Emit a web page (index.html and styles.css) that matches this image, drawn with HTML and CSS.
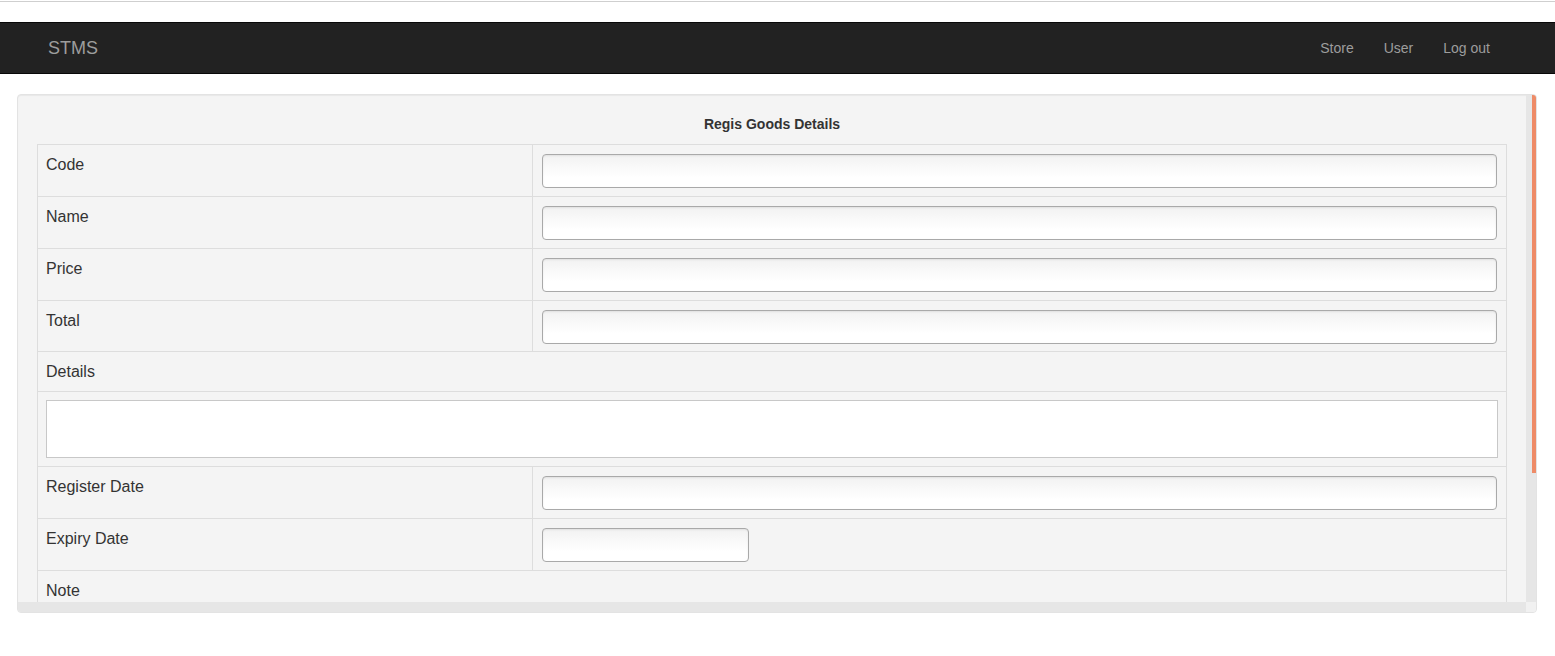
FILE: index.html
```html
<!DOCTYPE html>
<html>
<head>
<meta charset="utf-8">
<title>STMS</title>
<link rel="stylesheet" href="styles.css">
</head>
<body>
<div class="topline"></div>
<nav class="navbar">
  <a class="brand" href="#">STMS</a>
  <ul class="nav">
    <li><a href="#">Store</a></li>
    <li><a href="#">User</a></li>
    <li><a href="#">Log out</a></li>
  </ul>
</nav>
<div class="page">
  <div class="panel">
    <div class="content">
      <div class="title">Regis Goods Details</div>
      <table class="form-table">
        <colgroup><col class="col-label"><col></colgroup>
        <tr><td class="label">Code</td><td class="field"><input class="inp" type="text"></td></tr>
        <tr><td class="label">Name</td><td class="field"><input class="inp" type="text"></td></tr>
        <tr><td class="label">Price</td><td class="field"><input class="inp" type="text"></td></tr>
        <tr><td class="label">Total</td><td class="field field-tight"><input class="inp" type="text"></td></tr>
        <tr><td class="label label-wide" colspan="2">Details</td></tr>
        <tr><td class="field area-cell" colspan="2"><textarea class="area"></textarea></td></tr>
        <tr><td class="label">Register Date</td><td class="field"><input class="inp" type="text"></td></tr>
        <tr><td class="label">Expiry Date</td><td class="field"><input class="inp inp-short" type="text"></td></tr>
        <tr><td class="label label-wide" colspan="2">Note</td></tr>
        <tr><td class="field area-cell" colspan="2"><textarea class="area"></textarea></td></tr>
      </table>
    </div>
    <div class="vbar"><div class="vthumb"></div></div>
    <div class="hbar"></div>
    <div class="corner"></div>
  </div>
</div>
</body>
</html>
```
FILE: styles.css
```css
html, body {
  margin: 0;
  padding: 0;
  background: #fff;
  font-family: "Liberation Sans", Arial, sans-serif;
  font-size: 14px;
  line-height: 20px;
  color: #333;
}

.topline {
  margin-top: 1px;
  height: 0;
  border-top: 1px solid #cfcfcf;
}

.navbar {
  margin-top: 20px;
  height: 50px;
  background: #222;
  border-top: 1px solid #080808;
  border-bottom: 1px solid #080808;
  display: flex;
  align-items: center;
  justify-content: space-between;
  padding: 0 50px 0 48px;
}

.brand {
  color: #9d9d9d;
  font-size: 18px;
  text-decoration: none;
  line-height: 20px;
}

.nav {
  list-style: none;
  margin: 0;
  padding: 0;
  display: flex;
}

.nav a {
  display: block;
  padding: 0 15px;
  color: #9d9d9d;
  text-decoration: none;
  font-size: 14px;
}

.page {
  padding: 20px 18px 0 17px;
}

.panel {
  height: 517px;
  border: 1px solid #e3e3e3;
  border-radius: 4px;
  background: #f4f4f4;
  box-shadow: inset 0 1px 1px rgba(0, 0, 0, 0.05);
  display: grid;
  grid-template-columns: 1fr 10px;
  grid-template-rows: 1fr 10px;
  overflow: hidden;
}

.content {
  overflow: hidden;
  padding: 19px 19px 0 19px;
  min-width: 0;
  min-height: 0;
}

.title {
  text-align: center;
  font-weight: bold;
  font-size: 14px;
  line-height: 20px;
  padding-bottom: 10px;
}

.form-table {
  width: 100%;
  border-collapse: collapse;
  border: 1px solid #ddd;
  table-layout: fixed;
}

.col-label {
  width: 495px;
}

.form-table td {
  border: 1px solid #ddd;
  vertical-align: top;
}

.label {
  font-size: 16px;
  line-height: 22px;
  padding: 9px 8px 9px 8px;
}

.label-wide {
  padding: 9px 8px 8px 8px;
}

.field {
  padding: 9px 9px 8px 9px;
}

.field-tight {
  padding-bottom: 7px;
}

.area-cell {
  padding: 8px 8px 8px 8px;
}

.inp {
  display: block;
  box-sizing: border-box;
  width: 100%;
  height: 34px;
  margin: 0;
  border: 1px solid #a9a9a9;
  border-radius: 4px;
  background: linear-gradient(#f2f2f2, #ffffff 70%);
  box-shadow: inset 0 1px 2px rgba(0, 0, 0, 0.08);
  font: inherit;
  padding: 6px 12px;
}

.inp-short {
  width: 207px;
}

.area {
  display: block;
  box-sizing: border-box;
  width: 100%;
  height: 58px;
  margin: 0;
  border: 1px solid #c8c8c8;
  background: #fff;
  resize: none;
  font: inherit;
}

.vbar {
  background: #e6e6e6;
  position: relative;
}

.vthumb {
  position: absolute;
  top: 0;
  right: 0;
  width: 4px;
  height: 378px;
  background: #ee8b67;
}

.hbar {
  background: #e6e6e6;
}

.corner {
  background: #f1f1f1;
}
```
